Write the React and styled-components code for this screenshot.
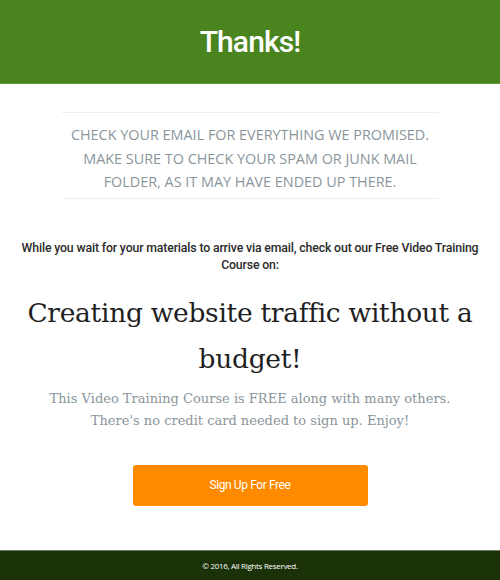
import React from 'react'
import styled, { createGlobalStyle } from 'styled-components'

const GlobalStyle = createGlobalStyle`
    html, body {
        margin: 0;
        padding: 0;
        background: #fff;
    }
`

// --------- header -----------
const Header = styled.header`
    height: 83px;
    background: #4a841f;
    border-bottom: 1px solid #5c9a2e;
    display: flex;
    align-items: center;
    justify-content: center;
`
const Title = styled.h1`
    margin: 0;
    font-family: Roboto, "Liberation Sans", sans-serif;
    font-weight: 500;
    font-size: 30px;
    letter-spacing: -0.9px;
    color: #fff;
`

// --------- main -----------
const Main = styled.main`
    height: 466px;
    display: flex;
    flex-direction: column;
    align-items: center;
`
const Line = styled.span`
    display: block;
    white-space: nowrap;
`
const Notice = styled.div`
    width: 377px;
    margin-top: 28px;
    padding: 10px 0 4px;
    border-top: 1px solid #eeeeee;
    border-bottom: 1px solid #eeeeee;
    font-family: "Open Sans", sans-serif;
    font-size: 14.4px;
    line-height: 23.5px;
    color: #8a959b;
    text-transform: uppercase;
    text-align: center;
`
const Intro = styled.p`
    margin: 41px 0 0;
    font-family: Roboto, "Liberation Sans", sans-serif;
    font-weight: 500;
    font-size: 12.3px;
    line-height: 17px;
    letter-spacing: -0.15px;
    color: #2b2b2b;
    text-align: center;
`
const Headline = styled.h2`
    margin: 16px 0 0;
    font-family: "DejaVu Serif", serif;
    font-weight: normal;
    font-size: 26.5px;
    line-height: 46px;
    letter-spacing: -0.3px;
    color: #1f1f1f;
    text-align: center;
`
const Sub = styled.p`
    margin: 6px 0 0;
    font-family: "DejaVu Serif", serif;
    font-size: 13px;
    line-height: 22px;
    color: #8a959b;
    text-align: center;
`
const Button = styled.button`
    margin-top: 33px;
    width: 235px;
    height: 41px;
    border: none;
    border-radius: 3px;
    background: #ff8a00;
    color: #fff;
    font-family: Roboto, "Liberation Sans", sans-serif;
    font-size: 12px;
    letter-spacing: -0.4px;
    cursor: pointer;
`

// --------- footer -----------
const Footer = styled.footer`
    height: 29px;
    background: #1b3208;
    border-top: 1px solid #6f7a66;
    display: flex;
    align-items: center;
    justify-content: center;
    font-family: "Open Sans", sans-serif;
    font-size: 8px;
    letter-spacing: -0.3px;
    color: #fff;
`

const App = () => {
  return (
    <>
      <GlobalStyle />
      <Header>
        <Title>Thanks!</Title>
      </Header>
      <Main>
        <Notice>
          <Line>Check your email for everything we promised.</Line>
          <Line>Make sure to check your spam or junk mail</Line>
          <Line>folder, as it may have ended up there.</Line>
        </Notice>
        <Intro>
          <Line>While you wait for your materials to arrive via email, check out our Free Video Training</Line>
          <Line>Course on:</Line>
        </Intro>
        <Headline>
          <Line>Creating website traffic without a</Line>
          <Line>budget!</Line>
        </Headline>
        <Sub>
          <Line>This Video Training Course is FREE along with many others.</Line>
          <Line>There's no credit card needed to sign up. Enjoy!</Line>
        </Sub>
        <Button>Sign Up For Free</Button>
      </Main>
      <Footer>© 2016, All Rights Reserved.</Footer>
    </>
  )
}

export default App
